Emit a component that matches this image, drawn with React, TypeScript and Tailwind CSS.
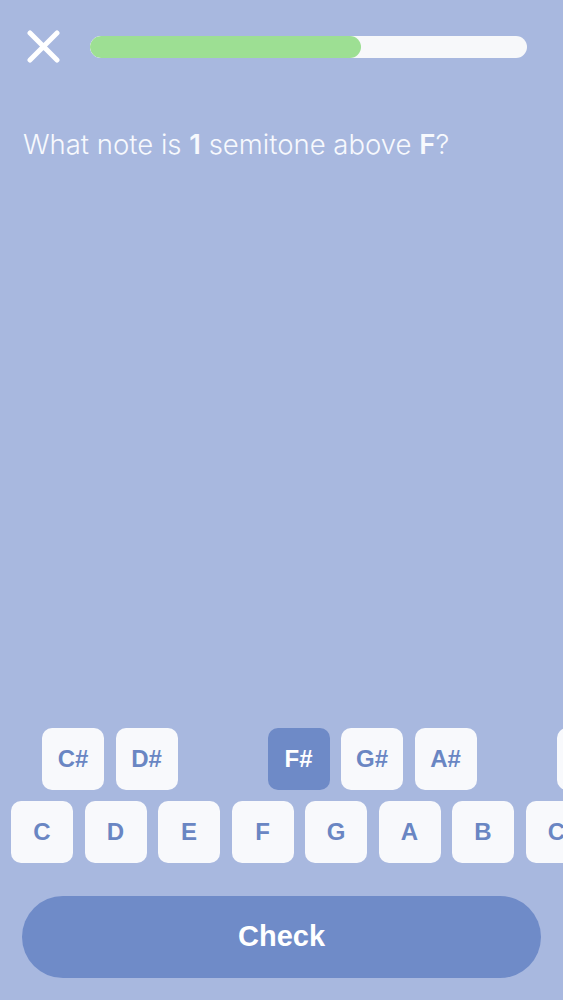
import React from 'react';

const sharps: { label: string; gap: string; selected?: boolean }[] = [
  { label: 'C#', gap: 'ml-0' },
  { label: 'D#', gap: 'ml-[11.5px]' },
  { label: 'F#', gap: 'ml-[90px]', selected: true },
  { label: 'G#', gap: 'ml-[11.5px]' },
  { label: 'A#', gap: 'ml-[11.5px]' },
  { label: 'C#', gap: 'ml-[80px]' },
];

const naturals = ['C', 'D', 'E', 'F', 'G', 'A', 'B', 'C'];

function Key({ label, selected }: { label: string; selected?: boolean }) {
  return (
    <div
      className={`flex h-[62px] w-[62px] shrink-0 items-center justify-center rounded-[10px] text-[24px] font-bold ${
        selected ? 'bg-[#6e8ac7] text-white' : 'bg-[#f8f9fc] text-[#6a86c3]'
      }`}
    >
      {label}
    </div>
  );
}

export default function App() {
  return (
    <div
      className="flex h-[1000px] w-full flex-col overflow-hidden bg-[#a8b8df]"
      style={{ fontFamily: '"Liberation Sans", Arial, sans-serif' }}
    >
      {/* Header */}
      <div className="flex items-center pl-[27px] pr-[36px] pt-[30px]">
        <button className="h-[33px] w-[33px] shrink-0">
          <svg viewBox="0 0 33 33" className="h-[33px] w-[33px]">
            <path d="M3 3 L30 30 M30 3 L3 30" stroke="#ffffff" strokeWidth="5" strokeLinecap="round" fill="none" />
          </svg>
        </button>
        <div className="ml-[30px] h-[22px] flex-1 overflow-hidden rounded-full bg-[#f7f8fa]">
          <div className="h-full w-[62%] rounded-full bg-[#9ddf93]" />
        </div>
      </div>

      {/* Question */}
      <p
        className="mt-[61px] pl-[23px] text-[27.5px] font-light text-[#f7f9fd]"
        style={{ fontFamily: 'Inter, "Liberation Sans", sans-serif' }}
      >
        What note is <span className="font-semibold">1</span> semitone above <span className="font-semibold">F</span>?
      </p>

      <div className="flex-1" />

      {/* Keyboard */}
      <div className="flex flex-col gap-[11.5px]">
        <div className="flex pl-[42px]">
          {sharps.map((k, i) => (
            <div key={i} className={k.gap}>
              <Key label={k.label} selected={k.selected} />
            </div>
          ))}
        </div>
        <div className="flex gap-[11.5px] pl-[11px]">
          {naturals.map((n, i) => (
            <Key key={i} label={n} />
          ))}
        </div>
      </div>

      {/* Check */}
      <div className="px-[22px] pb-[22px] pt-[33px]">
        <button className="flex h-[82px] w-full items-center justify-center rounded-full bg-[#6f8bc8] text-[29px] font-bold text-white">
          Check
        </button>
      </div>
    </div>
  );
}
